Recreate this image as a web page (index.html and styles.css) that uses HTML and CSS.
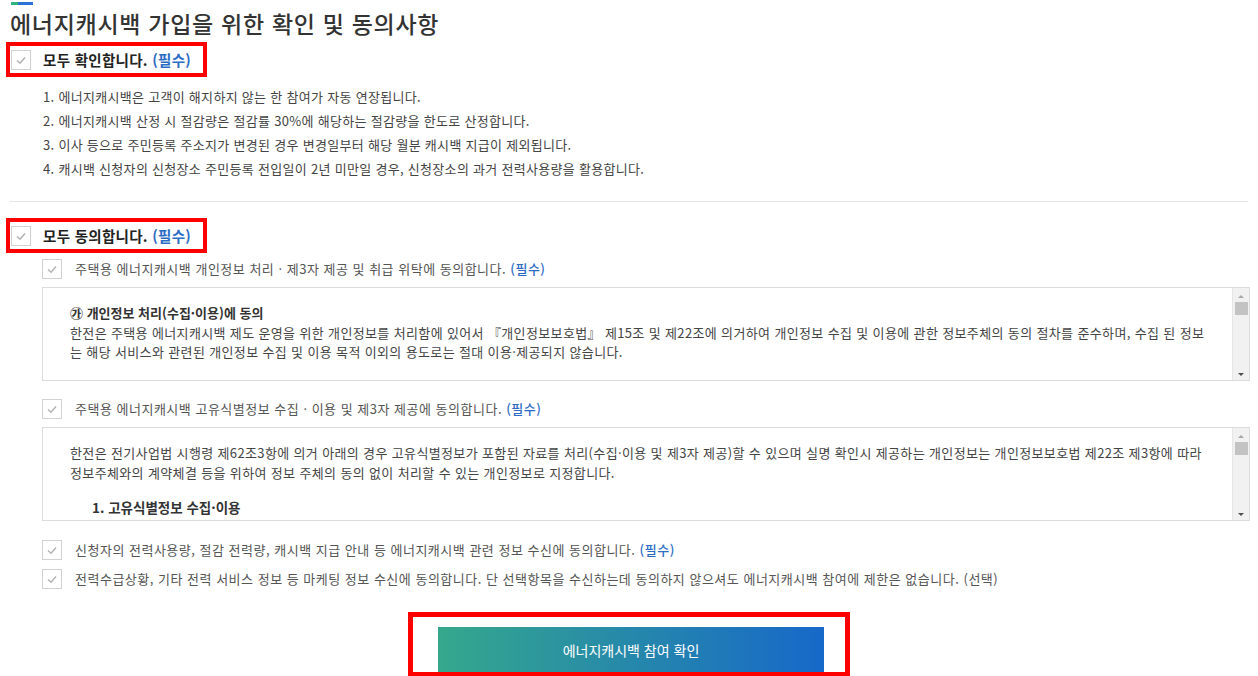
FILE: index.html
```html
<!DOCTYPE html>
<html lang="ko">
<head>
<meta charset="utf-8">
<title>에너지캐시백 가입 확인 및 동의</title>
<link rel="stylesheet" href="styles.css">
</head>
<body>
<main class="page">
  <span class="accent"></span>
  <h1 class="title">에너지캐시백 가입을 위한 확인 및 동의사항</h1>

  <section class="group">
    <label class="all-check mark">
      <span class="cbox"><svg viewBox="0 0 20 20" width="20" height="20"><polyline points="6,10.5 9,13.2 14,7.5" /></svg></span>
      <span class="all-label">모두 확인합니다. <em class="req">(필수)</em></span>
    </label>
    <ul class="notice">
      <li>1. 에너지캐시백은 고객이 해지하지 않는 한 참여가 자동 연장됩니다.</li>
      <li>2. 에너지캐시백 산정 시 절감량은 절감률 30%에 해당하는 절감량을 한도로 산정합니다.</li>
      <li>3. 이사 등으로 주민등록 주소지가 변경된 경우 변경일부터 해당 월분 캐시백 지급이 제외됩니다.</li>
      <li>4. 캐시백 신청자의 신청장소 주민등록 전입일이 2년 미만일 경우, 신청장소의 과거 전력사용량을 활용합니다.</li>
    </ul>
  </section>

  <hr class="divider">

  <section class="group group-agree">
    <label class="all-check mark">
      <span class="cbox"><svg viewBox="0 0 20 20" width="20" height="20"><polyline points="6,10.5 9,13.2 14,7.5" /></svg></span>
      <span class="all-label">모두 동의합니다. <em class="req">(필수)</em></span>
    </label>

    <label class="agree">
      <span class="cbox"><svg viewBox="0 0 20 20" width="20" height="20"><polyline points="6,10.5 9,13.2 14,7.5" /></svg></span>
      <span>주택용 에너지캐시백 개인정보 처리 · 제3자 제공 및 취급 위탁에 동의합니다. <em class="req">(필수)</em></span>
    </label>
    <div class="terms">
      <div class="terms-body">
        <p class="terms-head">㉮ 개인정보 처리(수집·이용)에 동의</p>
        <p>한전은 주택용 에너지캐시백 제도 운영을 위한 개인정보를 처리함에 있어서 『개인정보보호법』 제15조 및 제22조에 의거하여 개인정보 수집 및 이용에 관한 정보주체의 동의 절차를 준수하며, 수집 된 정보<br>는 해당 서비스와 관련된 개인정보 수집 및 이용 목적 이외의 용도로는 절대 이용·제공되지 않습니다.</p>
        <p class="terms-sub">- 수집·이용 목적 : 에너지캐시백 참여 신청 접수 및 캐시백 지급</p>
      </div>
      <div class="scrollbar"><span class="sb-up"></span><span class="sb-thumb"></span><span class="sb-space"></span><span class="sb-down"></span></div>
    </div>

    <label class="agree agree-2">
      <span class="cbox"><svg viewBox="0 0 20 20" width="20" height="20"><polyline points="6,10.5 9,13.2 14,7.5" /></svg></span>
      <span>주택용 에너지캐시백 고유식별정보 수집 · 이용 및 제3자 제공에 동의합니다. <em class="req">(필수)</em></span>
    </label>
    <div class="terms">
      <div class="terms-body">
        <p>한전은 전기사업법 시행령 제62조3항에 의거 아래의 경우 고유식별정보가 포함된 자료를 처리(수집·이용 및 제3자 제공)할 수 있으며 실명 확인시 제공하는 개인정보는 개인정보보호법 제22조 제3항에 따라<br>정보주체와의 계약체결 등을 위하여 정보 주체의 동의 없이 처리할 수 있는 개인정보로 지정합니다.</p>
        <p class="terms-title">1. 고유식별정보 수집·이용</p>
        <p class="terms-sub">- 수집·이용 목적 : 실명 확인 및 에너지캐시백 참여 자격 확인</p>
      </div>
      <div class="scrollbar"><span class="sb-up"></span><span class="sb-thumb"></span><span class="sb-space"></span><span class="sb-down"></span></div>
    </div>

    <label class="agree agree-3">
      <span class="cbox"><svg viewBox="0 0 20 20" width="20" height="20"><polyline points="6,10.5 9,13.2 14,7.5" /></svg></span>
      <span>신청자의 전력사용량, 절감 전력량, 캐시백 지급 안내 등 에너지캐시백 관련 정보 수신에 동의합니다. <em class="req">(필수)</em></span>
    </label>
    <label class="agree agree-4">
      <span class="cbox"><svg viewBox="0 0 20 20" width="20" height="20"><polyline points="6,10.5 9,13.2 14,7.5" /></svg></span>
      <span>전력수급상황, 기타 전력 서비스 정보 등 마케팅 정보 수신에 동의합니다. 단 선택항목을 수신하는데 동의하지 않으셔도 에너지캐시백 참여에 제한은 없습니다. (선택)</span>
    </label>
  </section>

  <div class="submit-wrap mark">
    <button class="submit" type="button">에너지캐시백 참여 확인</button>
  </div>
</main>
</body>
</html>
```

FILE: styles.css
```css
* { box-sizing: border-box; }
html, body { margin: 0; padding: 0; background: #fff; }
body {
  width: 1258px;
  height: 676px;
  overflow: hidden;
  font-family: "Noto Sans CJK KR", "Noto Sans", sans-serif;
  color: #444;
}
.page { padding-top: 2px; }
.accent {
  display: block;
  width: 22px;
  height: 3px;
  margin-left: 11px;
  background: linear-gradient(90deg, #2fb47c 0 32%, #2a72d5 32% 100%);
}
.title {
  margin: 3px 0 0 10px;
  font-size: 23px;
  line-height: 30px;
  font-weight: 500;
  letter-spacing: 0.7px;
  color: #333;
}
.mark { border: 4px solid #f00; }
.all-check {
  display: flex;
  width: max-content;
  align-items: center;
  gap: 12px;
  margin: 4px 0 0 6px;
  padding: 4px 12px 3px 1px;
}
.group-agree .all-check { margin-top: 16px; }
.cbox {
  display: block;
  flex: none;
  width: 20px;
  height: 20px;
  border: 1px solid #d2d2d2;
  background: #fff;
}
.cbox svg { display: block; margin: -1px; }
.cbox polyline { fill: none; stroke: #b3b3b3; stroke-width: 1.5; }
.all-label {
  font-size: 14.5px;
  font-weight: 700;
  line-height: 20px;
  letter-spacing: 0.3px;
  color: #222;
}
.req { font-style: normal; color: #2d6cc5; }
.notice {
  list-style: none;
  margin: 8px 0 0 43px;
  padding: 0;
  font-size: 13px;
  line-height: 24px;
  letter-spacing: 0.3px;
  color: #444;
}
.divider {
  height: 0;
  border: 0;
  border-top: 1px solid #e4e4e4;
  margin: 20px 10px 0 10px;
}
.agree {
  display: flex;
  align-items: center;
  gap: 13px;
  margin: 6px 0 0 42px;
  font-size: 13px;
  line-height: 20px;
  letter-spacing: 0.5px;
  color: #555;
}
.agree .req { font-weight: 500; }
.agree-2 { margin-top: 18px; }
.agree-3 { margin-top: 19px; }
.agree-4 { margin-top: 9px; }
.terms {
  display: flex;
  height: 94px;
  margin: 8px 8px 0 42px;
  border: 1px solid #dcdcdc;
}
.terms-body {
  flex: 1;
  overflow: hidden;
  padding: 15px 4px 0 27px;
  font-size: 13px;
  line-height: 19.5px;
  letter-spacing: 0.36px;
  color: #444;
}
.terms-body p { margin: 0; }
.terms-head { font-weight: 700; color: #333; letter-spacing: 0; }
.terms-title { margin-top: 16px !important; padding-left: 22px; font-size: 13.5px; font-weight: 700; letter-spacing: 0; color: #333; }
.terms-sub { margin-top: 14px !important; padding-left: 60px; }
.terms-title + .terms-sub { margin-top: 2px !important; padding-left: 22px; }
.scrollbar {
  display: flex;
  flex-direction: column;
  align-items: center;
  width: 17px;
  padding: 7px 0 4px;
  background: #f1f1f1;
  border-left: 1px solid #e6e6e6;
}
.sb-up {
  width: 0; height: 0;
  border-left: 3px solid transparent;
  border-right: 3px solid transparent;
  border-bottom: 3px solid #a8a8a8;
  margin-bottom: 4px;
}
.sb-thumb { width: 13px; height: 13px; background: #c3c3c3; }
.sb-space { flex: 1; }
.sb-down {
  width: 0; height: 0;
  border-left: 3px solid transparent;
  border-right: 3px solid transparent;
  border-top: 3px solid #505050;
}
.submit-wrap {
  display: flex;
  width: max-content;
  margin: 23px auto 0;
  padding: 10px 21px 0 25px;
  border-width: 5px;
}
.submit {
  width: 386px;
  height: 45px;
  border: 0;
  background: linear-gradient(90deg, #35a88c, #1768c9);
  color: #fff;
  font-family: "Noto Sans CJK KR", "Noto Sans", sans-serif;
  font-size: 14px;
  font-weight: 400;
  cursor: pointer;
}
```
